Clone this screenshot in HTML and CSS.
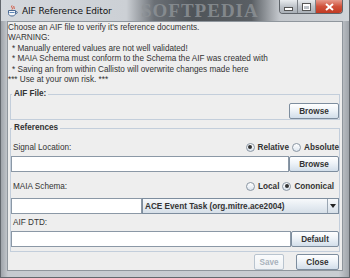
FILE: index.html
```html
<!DOCTYPE html>
<html lang="en">
<head>
    <title>AIF Reference Editor</title>
    <link rel="stylesheet" href="styles.css">
</head>
<body>
    <div class="window">
        <div class="titlebar">
            <svg class="app-icon" width="11" height="12" viewBox="0 0 11 12">
                <path d="M5 0.5 C3.5 2 6.5 3 5 4.5 M7 1 C6 2 8 3 7 4" stroke="#d2452b" stroke-width="1" fill="none"/>
                <path d="M1.5 5.5 H8.5 V8.5 C8.5 10 7 11 5 11 C3 11 1.5 10 1.5 8.5 Z" fill="#f4f6f9" stroke="#4a6a94" stroke-width="1"/>
                <path d="M8.5 6.5 H9.5 C10.5 6.5 10.5 8.5 9.5 8.5 H8.5" stroke="#4a6a94" stroke-width="1" fill="none"/>
                <path d="M2.5 7.5 H7.5" stroke="#5d86b8" stroke-width="1"/>
            </svg>
            <span class="title">AIF Reference Editor</span>
            <span class="watermark">SOFTPEDIA</span>
            <div class="controls">
                <span class="ctl min"><i class="dash"></i></span>
                <span class="ctl max"><i class="box"></i></span>
                <span class="ctl close">
                    <svg width="9" height="8" viewBox="0 0 9 8">
                        <path d="M1 1 L8 7 M8 1 L1 7" stroke="#fff" stroke-width="2"/>
                    </svg>
                </span>
            </div>
        </div>
        <div class="frame">
            <div class="content">
                <div class="intro">
                    <p>Choose an AIF file to verify it's reference documents.</p>
                    <p>WARNING:</p>
                    <p class="note">* Manually entered values are not well validated!</p>
                    <p class="note">* MAIA Schema must conform to the Schema the AIF was created with</p>
                    <p class="note">* Saving an from within Callisto will overwrite changes made here</p>
                    <p>*** Use at your own risk. ***</p>
                </div>

                <fieldset class="group">
                    <legend>AIF File:</legend>
                    <div class="row end">
                        <button class="btn browse">Browse</button>
                    </div>
                </fieldset>

                <fieldset class="group refs">
                    <legend>References</legend>
                    <div class="row label-row first">
                        <span class="label">Signal Location:</span>
                        <div class="radios">
                            <span class="radio checked"><i class="dot"></i>Relative</span>
                            <span class="radio"><i class="dot"></i>Absolute</span>
                        </div>
                    </div>
                    <div class="row field-row">
                        <input type="text" class="field">
                        <button class="btn browse">Browse</button>
                    </div>

                    <div class="row label-row second">
                        <span class="label">MAIA Schema:</span>
                        <div class="radios inset">
                            <span class="radio"><i class="dot"></i>Local</span>
                            <span class="radio checked"><i class="dot"></i>Cononical</span>
                        </div>
                    </div>
                    <div class="row field-row schema">
                        <input type="text" class="field small">
                        <div class="combo">
                            <span class="combo-text">ACE Event Task (org.mitre.ace2004)</span>
                            <span class="combo-arrow"><i></i></span>
                        </div>
                    </div>

                    <div class="row label-row third">
                        <span class="label">AIF DTD:</span>
                    </div>
                    <div class="row field-row">
                        <input type="text" class="field">
                        <button class="btn default">Default</button>
                    </div>
                </fieldset>

                <div class="actions">
                    <button class="btn save" disabled>Save</button>
                    <button class="btn close-btn">Close</button>
                </div>
            </div>
        </div>
    </div>
</body>
</html>
```

FILE: styles.css
```css
* {
    margin: 0;
    padding: 0;
    box-sizing: border-box;
    font-family: 'Liberation Sans', Arial, sans-serif;
}

body {
    width: 350px;
    height: 278px;
    overflow: hidden;
    background: #fff;
}

.window {
    width: 350px;
    height: 278px;
    display: flex;
    flex-direction: column;
    background: linear-gradient(to right, #9fa4aa, #c6cacf 2%, #c9cdd2 97%, #9fa4aa);
    border-left: 1px solid #62676d;
    border-right: 1px solid #62676d;
    border-bottom: 1px solid #62676d;
}

/* title bar */

.titlebar {
    position: relative;
    height: 21px;
    flex-shrink: 0;
    display: flex;
    align-items: center;
    padding-left: 6px;
    background: linear-gradient(to right, #d4d8dd 0, #ccd0d5 36%, #6b7076 44%, #4f5459 55%, #5a5f64 72%, #c3c7cc 80%, #d0d4d8 100%);
    overflow: hidden;
}

.app-icon {
    position: relative;
    z-index: 2;
}

.title {
    position: relative;
    z-index: 2;
    margin-left: 4px;
    font-size: 9px;
    color: #111;
    font-family: 'DejaVu Sans', sans-serif;
    letter-spacing: -0.1px;
}

.watermark {
    position: absolute;
    left: 140px;
    top: 1px;
    font-family: 'Liberation Serif', serif;
    font-weight: bold;
    font-size: 19px;
    line-height: 19px;
    letter-spacing: 1px;
    color: #8e9397;
    opacity: 0.8;
}

.controls {
    position: absolute;
    top: 0;
    right: 6px;
    display: flex;
    height: 14px;
    border: 1px solid #5f646a;
    border-top: none;
    border-radius: 0 0 4px 4px;
    overflow: hidden;
}

.ctl {
    display: flex;
    align-items: center;
    justify-content: center;
    height: 13px;
    background: linear-gradient(#e9ecef, #bfc4ca 50%, #a9afb6);
}

.ctl.min {
    width: 18px;
    border-right: 1px solid #7c8187;
}

.ctl.max {
    width: 18px;
    border-right: 1px solid #7c8187;
}

.ctl.close {
    width: 26px;
    background: linear-gradient(#e69a8c, #d0513b 50%, #c13a22);
}

.dash {
    display: block;
    width: 7px;
    height: 2px;
    margin-top: 4px;
    background: #fff;
    box-shadow: 0 0 0 1px #555;
}

.box {
    display: block;
    width: 7px;
    height: 6px;
    border: 1px solid #fff;
    border-top-width: 2px;
    outline: 1px solid #555;
}

/* frame and content */

.frame {
    flex: 1;
    padding: 0 6px 7px 6px;
    display: flex;
}

.content {
    flex: 1;
    background: #eeeeee;
    border: 1px solid #8f969d;
    color: #333;
    font-size: 8.2px;
}

.intro {
    padding: 1px 0 0 0;
    line-height: 10.4px;
}

.intro .note {
    padding-left: 4px;
}

/* titled groups */

.group {
    margin: 4px 2px 0 2px;
    padding: 4px 0 0 0;
    border: 1px solid #c3cedb;
    min-width: 0;
}

.group legend {
    margin-left: 1px;
    padding: 0 2px;
    font-weight: bold;
    line-height: 10px;
    color: #333;
}

.refs {
    margin-top: 3px;
    padding: 0 0 4px 0;
}

.row {
    display: flex;
    align-items: center;
}

.row.end {
    justify-content: flex-end;
}

.label-row {
    height: 12px;
    justify-content: space-between;
}

.label-row.first {
    margin-top: 8px;
}

.label-row.second {
    margin-top: 8px;
}

.label-row.third {
    margin-top: 3px;
    height: 11px;
}

.label {
    padding-left: 2px;
}

.radios {
    display: flex;
    align-items: center;
    gap: 3px;
    font-weight: bold;
}

.radios.inset {
    padding-right: 5px;
}

.radio {
    display: flex;
    align-items: center;
    gap: 3px;
}

.dot {
    display: flex;
    align-items: center;
    justify-content: center;
    width: 9px;
    height: 9px;
    border: 1px solid #8a96a3;
    border-radius: 50%;
    background: linear-gradient(#ffffff, #dde5ee);
}

.radio.checked .dot::after {
    content: '';
    width: 4px;
    height: 4px;
    border-radius: 50%;
    background: #333;
}

.field-row {
    margin-top: 3px;
    height: 16px;
}

.field-row.schema {
    margin-top: 6px;
}

.field {
    flex: 1;
    height: 16px;
    min-width: 0;
    border: 1px solid #8b98a6;
    background: #fff;
    outline: none;
}

.field.small {
    flex: none;
    width: 131px;
}

/* buttons */

.btn {
    height: 16px;
    border: 1px solid #7d8d9e;
    border-radius: 2px;
    background: linear-gradient(#ffffff, #eef3f8 45%, #d2deea);
    color: #333;
    font-size: 8.2px;
    font-weight: bold;
    cursor: pointer;
}

.browse {
    width: 50px;
}

.default {
    width: 48px;
}

.combo {
    flex: 1;
    height: 16px;
    display: flex;
    align-items: center;
    border: 1px solid #7d8d9e;
    background: linear-gradient(#f7f9fb, #e6ecf2 50%, #d6dfe8);
    font-weight: bold;
}

.combo-text {
    flex: 1;
    padding-left: 2px;
}

.combo-arrow {
    width: 11px;
    height: 100%;
    display: flex;
    align-items: center;
    justify-content: center;
    border-left: 1px solid #9aa6b3;
}

.combo-arrow i {
    width: 0;
    height: 0;
    border-left: 3px solid transparent;
    border-right: 3px solid transparent;
    border-top: 4px solid #222;
}

/* bottom buttons */

.actions {
    display: flex;
    justify-content: flex-end;
    margin-top: 2px;
    padding-right: 3px;
}

.save {
    width: 30px;
    margin-right: 12px;
    color: #a9b2bc;
    border-color: #b9c4cf;
    background: linear-gradient(#fafbfc, #eef1f4);
    cursor: default;
}

.close-btn {
    width: 43px;
}
```
